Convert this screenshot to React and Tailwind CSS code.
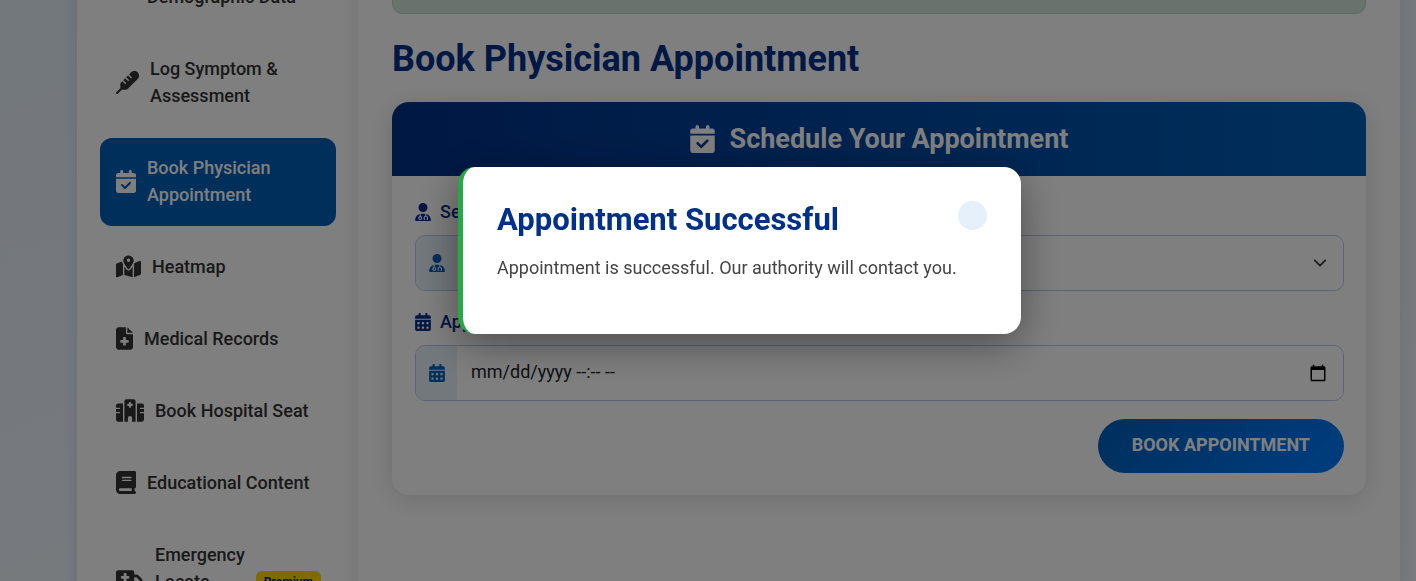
import {
  FaBook,
  FaCalendarCheck,
  FaCalendarDays,
  FaFileMedical,
  FaHospital,
  FaMapLocationDot,
  FaThermometer,
  FaTruckMedical,
  FaUserDoctor,
} from "react-icons/fa6";

const navItems = [
  { icon: FaCalendarDays, width: "w-5", label: ["Submit", "Demographic Data"] },
  { icon: FaThermometer, width: "w-[23px]", label: ["Log Symptom &", "Assessment"] },
  { icon: FaCalendarCheck, width: "w-5", label: ["Book Physician", "Appointment"], active: true },
  { icon: FaMapLocationDot, width: "w-[25px]", label: ["Heatmap"] },
  { icon: FaFileMedical, width: "w-[17px]", label: ["Medical Records"] },
  { icon: FaHospital, width: "w-7", label: ["Book Hospital Seat"] },
  { icon: FaBook, width: "w-5", label: ["Educational Content"] },
  { icon: FaTruckMedical, width: "w-7", label: ["Emergency", "Locate", "Services"], badge: "Premium" },
];

function NavItem({ icon: Icon, width, label, active, badge }) {
  return (
    <li>
      <a
        href="#"
        aria-current={active ? "page" : undefined}
        className={
          active
            ? "flex items-center gap-[11px] rounded-xl bg-[#005eb8] px-4 pt-4 pb-[18px] text-white"
            : "flex items-center gap-[11px] rounded-xl px-4 pt-4 pb-[18px] text-[#333333]"
        }
      >
        <Icon className={`h-[23px] shrink-0 ${width}`} />
        <span className="whitespace-nowrap">
          {label.map((line) => (
            <span key={line} className="block">
              {line}
            </span>
          ))}
        </span>
        {badge && (
          <span className="mr-0.5 ml-auto rounded-md bg-[#ffd700] px-2 py-[3px] text-xs leading-4 font-bold text-[#003087]">
            {badge}
          </span>
        )}
      </a>
    </li>
  );
}

function Sidebar() {
  return (
    <nav className="w-[281px] shrink-0 bg-white pr-[22px] pl-[23px] shadow-[0_4px_14px_rgba(0,48,135,0.12)]">
      <ul className="flex flex-col gap-[11px]">
        {navItems.map((item) => (
          <NavItem key={item.label[0]} {...item} />
        ))}
      </ul>
    </nav>
  );
}

function Field({ id, label, icon: Icon, children }) {
  return (
    <div className="mb-[18px]">
      <label
        htmlFor={id}
        className="mb-[11px] flex items-center gap-[9px] leading-[25px] font-medium text-[#003087]"
      >
        <Icon className="h-[18px] w-4" />
        {label}
      </label>
      <div className="flex h-14 overflow-hidden rounded-[10px] border border-[#b8c6f0]">
        <span className="flex w-[41px] shrink-0 items-center justify-center bg-[#e6f0fa] text-[#005eb8]">
          <Icon className="h-[18px] w-4" />
        </span>
        {children}
      </div>
    </div>
  );
}

function AppointmentCard() {
  return (
    <section className="overflow-hidden rounded-[17px] bg-white shadow-[0_4px_24px_rgba(0,0,0,0.15)]">
      <h2 className="flex h-[74px] items-center justify-center gap-[15px] bg-linear-to-r from-[#003087] to-[#005eb8] text-[27px] font-bold text-white">
        <FaCalendarCheck className="h-7 w-[25px]" />
        Schedule Your Appointment
      </h2>
      <form className="pt-[23px] pr-[22px] pb-[22px] pl-[23px]" onSubmit={(e) => e.preventDefault()}>
        <Field id="physician" label="Select Physician" icon={FaUserDoctor}>
          <div className="relative flex flex-1">
            <select id="physician" className="flex-1 appearance-none bg-white px-[14px] text-[#212529] outline-none">
              <option>Choose a physician</option>
            </select>
            <svg
              viewBox="0 0 16 16"
              className="pointer-events-none absolute top-1/2 right-4 size-3.5 -translate-y-1/2"
              fill="none"
              stroke="#343a40"
              strokeWidth="2"
              strokeLinecap="round"
              strokeLinejoin="round"
            >
              <path d="m2 5 6 6 6-6" />
            </svg>
          </div>
        </Field>
        <Field id="datetime" label="Appointment Date & Time" icon={FaCalendarDays}>
          <input
            id="datetime"
            type="text"
            placeholder="mm/dd/yyyy --:-- --"
            className="min-w-0 flex-1 bg-white px-[14px] pb-1 text-[#212529] outline-none placeholder:text-[#212529]"
          />
          <button type="button" aria-label="Open calendar" className="bg-white pr-4">
            <svg viewBox="0 0 24 24" className="size-[18px]" fill="#000000">
              <path d="M20 3h-1V1h-2v2H7V1H5v2H4c-1.1 0-2 .9-2 2v16c0 1.1.9 2 2 2h16c1.1 0 2-.9 2-2V5c0-1.1-.9-2-2-2zm0 18H4V8h16v13z" />
            </svg>
          </button>
        </Field>
        <div className="flex justify-end">
          <button
            type="submit"
            className="h-[54px] rounded-full bg-linear-135 from-[#005eb8] to-[#007bff] px-[34px] pb-[3px] font-bold text-white uppercase"
          >
            Book Appointment
          </button>
        </div>
      </form>
    </section>
  );
}

function SuccessDialog() {
  return (
    <div className="fixed inset-0 z-10 flex items-center justify-center bg-black/50 pb-20 pl-[63px]">
      <div
        role="dialog"
        aria-modal="true"
        aria-labelledby="dialog-title"
        className="w-[563px] rounded-[17px] border-l-[5px] border-[#28a745] bg-white p-[34px] shadow-[0_10px_40px_rgba(0,0,0,0.4)]"
      >
        <div className="mb-4 flex items-start justify-between">
          <h2 id="dialog-title" className="text-[31px] leading-[37px] font-bold text-[#003087]">
            Appointment Successful
          </h2>
          <button type="button" aria-label="Close" className="size-[29px] rounded-full bg-[#e6f0fa]" />
        </div>
        <p className="mb-[19px] text-[#444444]">Appointment is successful. Our authority will contact you.</p>
      </div>
    </div>
  );
}

export default function App() {
  return (
    <div className="h-screen overflow-hidden bg-linear-to-br from-[#e6f0fa] to-[#f4f7fc] font-['Roboto',sans-serif] text-[18px] leading-[27px]">
      <div className="-mt-[60px] flex min-h-[calc(100vh+60px)] pr-4 pl-[77px] font-medium">
        <Sidebar />
        <main className="min-w-0 flex-1 bg-white px-[34px] font-normal shadow-[0_4px_20px_rgba(0,0,0,0.1)]">
          <div role="status" className="h-[74px] rounded-[10px] border border-[#badbcc] bg-[#d1e7dd]" />
          <h1 className="mt-[23px] mb-[21px] text-[36px] leading-[44px] font-bold text-[#003087]">
            Book Physician Appointment
          </h1>
          <AppointmentCard />
        </main>
      </div>
      <SuccessDialog />
    </div>
  );
}
